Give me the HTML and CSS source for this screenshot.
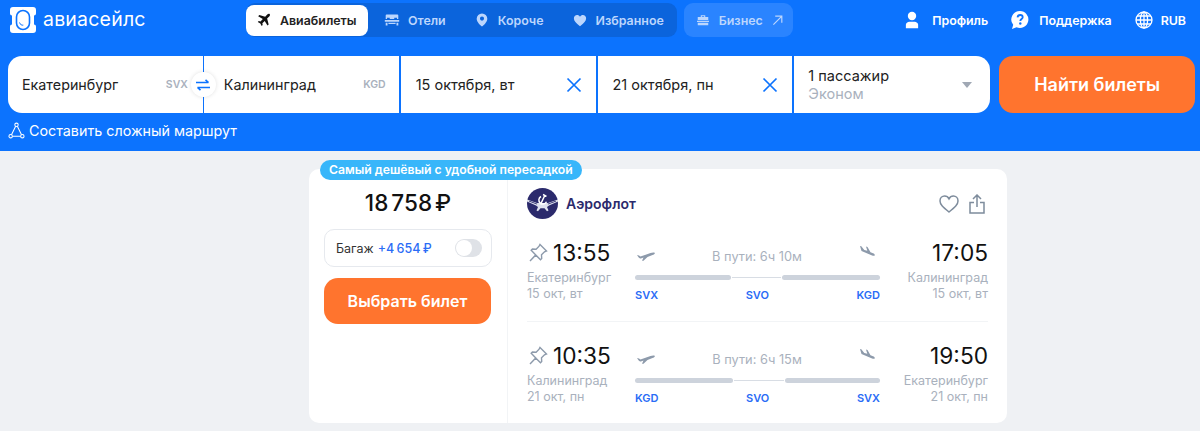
FILE: index.html
```html
<!DOCTYPE html>
<html lang="ru">
<head>
  <meta charset="UTF-8">
  <title>Авиасейлс</title>
  <link rel="stylesheet" href="styles.css">
</head>
<body>
  <header class="top">
    <div class="topbar">
      <a class="logo">
        <svg class="logo-icon" width="26" height="26" viewBox="0 0 26 26"><path fill="#fff" d="M3 0h20a3 3 0 0 1 3 3v3.500a2 2 0 0 1-2 2v9a2 2 0 0 1 2 2V23a3 3 0 0 1-3 3H3a3 3 0 0 1-3-3v-3.500a2 2 0 0 1 2-2v-9a2 2 0 0 1-2-2V3a3 3 0 0 1 3-3z"/><rect x="6.500" y="3.500" width="13" height="19" rx="6.500" fill="none" stroke="#0c73fe" stroke-width="1.600"/><path d="M9.500 15.500c.6 2 2.200 3 3.800 2.600" stroke="#0c73fe" stroke-width="1" fill="none"/></svg>
        <span class="logo-text">авиасейлс</span>
      </a>
      <nav class="tabs">
        <a class="tab active">
          <svg width="14" height="14" viewBox="0 0 18 18"><path fill="#111" d="M16.500 1.500c-1-.8-2.400-.4-3.300.5L10.500 4.700 3 2.700 1.500 4.200l6 3.600-3 3-2.200-.4L1 11.700l3.300 1.700L6 16.800l1.300-1.300-.4-2.300 3-3 3.600 6 1.500-1.500-2-7.500 2.700-2.700c.9-.9 1.300-2 .8-2.500z"/></svg>
          Авиабилеты
        </a>
        <a class="tab">
          <svg width="18" height="18" viewBox="-1 -1 20 20"><path fill="#bcd6fd" d="M3 3h12a1 1 0 0 1 1 1v4h-1.500V6.500h-3V8h-5V6.500h-3V8H2V4a1 1 0 0 1 1-1zM1 9h16v2H1zm1 3h2v3H2zm12 0h2v3h-2zM5 12h8v1.500H5z"/></svg>
          Отели
        </a>
        <a class="tab">
          <svg width="18" height="18" viewBox="-2 -2 22 22"><path fill="#bcd6fd" fill-rule="evenodd" d="M9 1a6.500 6.500 0 0 1 6.500 6.500C15.500 11.500 11 15.500 9 17 7 15.500 2.500 11.500 2.500 7.500A6.500 6.500 0 0 1 9 1zm0 3.800a2.500 2.500 0 1 0 0 5 2.500 2.500 0 0 0 0-5z"/></svg>
          Короче
        </a>
        <a class="tab">
          <svg width="18" height="18" viewBox="-2 -2 22 22"><path fill="#bcd6fd" d="M9 16.500C4 12.500 1.500 10 1.500 6.800 1.500 4.400 3.300 2.800 5.400 2.800c1.500 0 2.800.8 3.600 2.200.8-1.400 2.100-2.200 3.600-2.200 2.100 0 3.900 1.600 3.900 4 0 3.200-2.500 5.700-7.500 9.700z"/></svg>
          Избранное
        </a>
      </nav>
      <a class="biz">
        <svg width="12" height="12" viewBox="0 0 16 16"><path fill="#bcd6fd" d="M5 4V1.500h6V4h4v4H1V4zm1.500 0h3V3h-3zM0 9h16v1.500H0zm1 2.500h14V15H1z"/></svg>
        Бизнес
        <svg class="biz-arrow" width="11" height="11" viewBox="0 0 12 12"><path d="M1.500 10.500 10.500 1.500M3.500 1.300h7.200v7.200" stroke="#bcd6fd" stroke-width="1.300" fill="none"/></svg>
      </a>
      <div class="user-links">
        <a class="user-link profile">
          <svg width="14" height="18" viewBox="0 0 16 20"><circle cx="8" cy="5.500" r="4.800" fill="#fff"/><path fill="#fff" d="M1 19.500v-4c0-2 2-3.500 4-3.500h6c2 0 4 1.500 4 3.500v4z"/></svg>
          Профиль
        </a>
        <a class="user-link">
          <svg width="18" height="20" viewBox="0 0 18 20"><path fill="#fff" d="M9 1a8.500 8.500 0 1 1-3.500 16.300L1 19l1.200-4.200A8.500 8.500 0 0 1 9 1z"/><path d="M6.500 7.400C6.700 5.900 7.800 5 9.200 5c1.500 0 2.500 1 2.500 2.200 0 1.800-2.400 1.800-2.400 3.800" stroke="#0c73fe" stroke-width="1.800" fill="none"/><circle cx="9.300" cy="13.500" r="1.200" fill="#0c73fe"/></svg>
          Поддержка
        </a>
        <a class="user-link currency">
          <svg width="18" height="18" viewBox="0 0 18 18" fill="none" stroke="#fff" stroke-width="1.300"><circle cx="9" cy="9" r="8"/><ellipse cx="9" cy="9" rx="3.600" ry="8"/><path d="M9 1v16M1 9h16M2 5h14M2 13h14"/></svg>
          RUB
        </a>
      </div>
    </div>

    <div class="search">
      <div class="field origin">
        <span class="city">Екатеринбург</span><span class="iata">SVX</span>
        <span class="swap">
          <svg width="14" height="12" viewBox="0 0 14 12" fill="none" stroke="#0c73fe" stroke-width="1.600"><path d="M0 3.500h12.500M9.500.8l3 2.700M14 8.500H1.500M4.500 11.200l-3-2.700"/></svg>
        </span>
      </div>
      <div class="field dest">
        <span class="city">Калининград</span><span class="iata">KGD</span>
      </div>
      <div class="field date">
        <span>15 октября, вт</span>
        <svg class="clear" width="16" height="16" viewBox="0 0 16 16"><path d="M1.500 1.500l13 13M14.500 1.500l-13 13" stroke="#0c73fe" stroke-width="1.700"/></svg>
      </div>
      <div class="field date">
        <span>21 октября, пн</span>
        <svg class="clear" width="16" height="16" viewBox="0 0 16 16"><path d="M1.500 1.500l13 13M14.500 1.500l-13 13" stroke="#0c73fe" stroke-width="1.700"/></svg>
      </div>
      <div class="field pax">
        <div class="pax-text">
          <div>1 пассажир</div>
          <div class="pax-class">Эконом</div>
        </div>
        <span class="caret"></span>
      </div>
      <button class="find">Найти билеты</button>
    </div>

    <a class="route-link">
      <svg width="17" height="17" viewBox="0 0 18 18" fill="none" stroke="#fff" stroke-width="1.100"><circle cx="9" cy="3" r="1.800"/><circle cx="2.800" cy="15" r="1.800"/><circle cx="15.200" cy="15" r="1.800"/><path d="M8.100 4.600 3.700 13.400M9.900 4.600l4.400 8.800M4.600 15h8.800"/></svg>
      Составить сложный маршрут
    </a>
  </header>

  <main class="results">
    <article class="ticket">
      <span class="badge">Самый дешёвый с удобной пересадкой</span>
      <section class="buy">
        <div class="price">18 758 ₽</div>
        <div class="baggage">
          <span class="baggage-label">Багаж</span>
          <span class="baggage-price">+4 654 ₽</span>
          <span class="toggle"></span>
        </div>
        <button class="select">Выбрать билет</button>
      </section>

      <section class="details">
        <div class="ticket-head">
          <svg width="31" height="31" viewBox="0 0 31 31"><circle cx="15.500" cy="15.500" r="15.500" fill="#2b2a6c"/><path fill="#dfe2ee" d="M0 11.500l10 3.500h11l10-3.500v2L22 17.500l-2 1.500 1.500 3.500-1.500.7-2.500-3h-4l-2.500 3-1.500-.7L11 19l-2-1.500L0 13.500z"/><path fill="#2b2a6c" d="M2 13.500l8 3 .3-.7-8-3zM29 13.500l-8 3-.3-.7 8-3z"/><path d="M14 8.500a4 4 0 1 0 5.500 5.200M13.500 16.500l4.500-9.500M16 6.500l3.500 1.800" stroke="#fff" stroke-width="1.500" fill="none"/></svg>
          <span class="airline">Аэрофлот</span>
          <div class="head-actions">
            <svg width="20" height="18" viewBox="0 0 20 18"><path fill="none" stroke="#7e8c9c" stroke-width="1.500" d="M10 17C4 12 1 9.500 1 5.900 1 3 3.200 1 5.600 1c1.900 0 3.500 1 4.400 2.800C10.900 2 12.500 1 14.400 1 16.800 1 19 3 19 5.900 19 9.500 16 12 10 17z"/></svg>
            <svg width="16" height="20" viewBox="0 0 16 20" fill="none" stroke="#7e8c9c" stroke-width="1.500"><path d="M8 13V1.500M4 5l4-4 4 4M5 8.500H1v10.500h14V8.500h-4"/></svg>
          </div>
        </div>

        <div class="leg">
          <div class="point">
            <div class="time">
              <svg class="pin" width="20" height="20" viewBox="0 0 20 20"><path fill="none" stroke="#8d9aab" stroke-width="1.400" d="M12 1.500l6.500 6.500-2 .8-3 3 .2 3.700-1.200 1.200L7.700 11.900 2 18l5.800-6-4.600-4.800L4.400 6l3.700.2 3-3z"/></svg>
              13:55
            </div>
            <div class="sub">Екатеринбург</div>
            <div class="sub">15 окт, вт</div>
          </div>
          <div class="track">
            <div class="track-top">
              <svg class="takeoff" width="18" height="10" viewBox="0 0 18 10"><path fill="#8d9aab" d="M0 4l2 .4 1.500 1.200 10-3.600c1.500-.5 3.800-.9 4.300 0 .3.800-1 1.500-2.300 2L10.500 6 6.500 9.700H5l1.500-3.200-2 .7C3 7.700 2 7.300 1.500 6.300z"/></svg>
              <span class="duration">В пути: 6ч 10м</span>
              <svg width="16" height="13" viewBox="0 0 16 13"><path fill="#8d9aab" d="M1 0l1.300.2 3 3.800 3 .7L7 .5 8.500 1l3 5.200 2.500 1c1 .4 2 1.200 1.800 2-.3.800-1.600.6-2.700.2L2.500 5z"/></svg>
            </div>
            <div class="bars">
              <span class="bar seg-a"></span><span class="thin"></span><span class="bar seg-b"></span>
            </div>
            <div class="codes"><span>SVX</span><span>SVO</span><span>KGD</span></div>
          </div>
          <div class="point right">
            <div class="time">17:05</div>
            <div class="sub">Калининград</div>
            <div class="sub">15 окт, вт</div>
          </div>
        </div>

        <hr class="divider">

        <div class="leg">
          <div class="point">
            <div class="time">
              <svg class="pin" width="20" height="20" viewBox="0 0 20 20"><path fill="none" stroke="#8d9aab" stroke-width="1.400" d="M12 1.500l6.500 6.500-2 .8-3 3 .2 3.700-1.200 1.200L7.700 11.900 2 18l5.800-6-4.600-4.800L4.400 6l3.700.2 3-3z"/></svg>
              10:35
            </div>
            <div class="sub">Калининград</div>
            <div class="sub">21 окт, пн</div>
          </div>
          <div class="track">
            <div class="track-top">
              <svg class="takeoff" width="18" height="10" viewBox="0 0 18 10"><path fill="#8d9aab" d="M0 4l2 .4 1.500 1.200 10-3.600c1.500-.5 3.800-.9 4.300 0 .3.800-1 1.500-2.300 2L10.500 6 6.500 9.700H5l1.500-3.200-2 .7C3 7.700 2 7.300 1.500 6.300z"/></svg>
              <span class="duration">В пути: 6ч 15м</span>
              <svg width="16" height="13" viewBox="0 0 16 13"><path fill="#8d9aab" d="M1 0l1.300.2 3 3.800 3 .7L7 .5 8.500 1l3 5.200 2.500 1c1 .4 2 1.200 1.800 2-.3.800-1.600.6-2.700.2L2.500 5z"/></svg>
            </div>
            <div class="bars">
              <span class="bar seg-c"></span><span class="thin"></span><span class="bar seg-d"></span>
            </div>
            <div class="codes"><span>KGD</span><span>SVO</span><span>SVX</span></div>
          </div>
          <div class="point right">
            <div class="time">19:50</div>
            <div class="sub">Екатеринбург</div>
            <div class="sub">21 окт, пн</div>
          </div>
        </div>
      </section>
    </article>
  </main>
</body>
</html>
```
FILE: styles.css
```css
* {
  box-sizing: border-box;
}
body {
  margin: 0;
  height: 431px;
  overflow: hidden;
  background-color: #eff1f4;
  font-family: Inter, 'Noto Sans', sans-serif;
  color: #222;
}
svg {
  display: block;
  flex: none;
}
button {
  font-family: inherit;
  border: none;
  color: #fff;
  background-color: #ff742e;
}

/* header */
.top {
  height: 151px;
  background-color: #0c73fe;
  padding: 3px 5px 0 8px;
}
.topbar {
  display: flex;
  align-items: center;
  height: 34px;
}
.logo {
  display: flex;
  align-items: center;
  gap: 7px;
  width: 238px;
  padding-left: 2px;
}
.logo-text {
  color: #fff;
  font-size: 19.5px;
  letter-spacing: 0.2px;
  line-height: 24px;
  margin-top: -3px;
}
.tabs {
  display: flex;
  align-items: center;
  height: 34px;
  background-color: #0b64dc;
  border-radius: 9px;
  padding-right: 1px;
}
.tab {
  display: flex;
  align-items: center;
  gap: 7px;
  height: 32px;
  padding: 0 12px 0 11px;
  margin-right: 4px;
  font-size: 12.4px;
  font-weight: 600;
  color: #bcd6fd;
}
.tab:last-child {
  margin-right: 0;
}
.tab.active {
  gap: 9px;
  width: 122px;
  height: 31px;
  background-color: #fff;
  color: #222;
  border-radius: 8px;
}
.biz {
  display: flex;
  align-items: center;
  gap: 10px;
  width: 109px;
  height: 34px;
  margin-left: 7px;
  padding-left: 13px;
  border-radius: 9px;
  background-color: #2a84ff;
  color: #bcd6fd;
  font-size: 12.4px;
  font-weight: 600;
}
.biz-arrow {
  margin-left: -1px;
}
.user-links {
  display: flex;
  align-items: center;
  gap: 23px;
  margin-left: auto;
  padding-right: 9px;
}
.user-link {
  display: flex;
  align-items: center;
  gap: 10px;
  color: #fff;
  font-size: 12.4px;
  font-weight: 600;
}
.user-link.profile {
  gap: 13px;
}
.user-link.currency {
  gap: 8px;
}

/* search form */
.search {
  display: flex;
  height: 58px;
  margin-top: 19px;
}
.field {
  position: relative;
  display: flex;
  align-items: center;
  justify-content: space-between;
  height: 57px;
  background-color: #fff;
  font-size: 14.5px;
  margin-right: 2px;
}
.origin {
  width: 195px;
  padding: 0 15px 0 14px;
  margin-right: 1px;
  border-radius: 14px 0 0 14px;
}
.dest {
  width: 195px;
  padding: 0 13px 0 20px;
}
.city {
  font-size: 14.3px;
}
.iata {
  font-size: 10.5px;
  font-weight: 600;
  color: #a9b1bd;
}
.swap {
  position: absolute;
  right: -13px;
  top: 16px;
  z-index: 1;
  display: flex;
  align-items: center;
  justify-content: center;
  width: 25px;
  height: 25px;
  border-radius: 50%;
  background-color: #fff;
  box-shadow: 0 0 4px rgba(0, 0, 0, 0.12);
}
.date {
  width: 195px;
  padding: 0 14px 0 15px;
}
.pax {
  width: 196px;
  padding: 0 18px 0 14px;
  margin-right: 9px;
  border-radius: 0 14px 14px 0;
}
.pax-text {
  line-height: 17.500px;
}
.pax-class {
  color: #a9b1bd;
}
.caret {
  border-left: 5px solid transparent;
  border-right: 5px solid transparent;
  border-top: 6px solid #a0a8b4;
}
.find {
  width: 196px;
  height: 57px;
  border-radius: 14px;
  font-size: 18px;
  font-weight: 600;
}
.route-link {
  display: flex;
  align-items: center;
  gap: 4px;
  margin-top: 8px;
  color: #fff;
  font-size: 14.3px;
}

/* ticket */
.results {
  padding: 18px 0 0 309px;
}
.ticket {
  position: relative;
  display: flex;
  width: 698px;
  height: 254px;
  background-color: #fff;
  border-radius: 10px;
}
.badge {
  position: absolute;
  left: 11px;
  top: -9px;
  height: 20px;
  padding: 0 9px;
  border-radius: 10px;
  background-color: #38b6fa;
  color: #fff;
  font-size: 12.2px;
  font-weight: 600;
  line-height: 20px;
}
.buy {
  width: 199px;
  padding: 20px 15px 0 15px;
  border-right: 1px solid #f2f4f6;
}
.price {
  font-size: 22.5px;
  font-weight: 500;
  line-height: 27px;
  text-align: center;
  word-spacing: -3px;
  color: #111;
}
.baggage {
  display: flex;
  align-items: center;
  height: 38px;
  margin-top: 13px;
  padding: 0 9px 0 11px;
  border: 1px solid #e6e9ee;
  border-radius: 10px;
  font-size: 12.5px;
}
.baggage-label {
  margin-right: 4px;
  color: #333;
}
.baggage-price {
  color: #2a6cf6;
  font-weight: 500;
  word-spacing: -1px;
}
.toggle {
  position: relative;
  width: 27px;
  height: 18px;
  margin-left: auto;
  border-radius: 9px;
  background-color: #dfe2e7;
}
.toggle::after {
  content: "";
  position: absolute;
  left: 1px;
  top: 1px;
  width: 16px;
  height: 16px;
  border-radius: 50%;
  background-color: #fff;
}
.select {
  display: block;
  width: 167px;
  height: 46px;
  margin-top: 11px;
  border-radius: 14px;
  font-size: 16px;
  font-weight: 600;
}
.details {
  flex: 1;
  padding: 19px 19px 0 19px;
}
.ticket-head {
  display: flex;
  align-items: center;
  height: 31px;
}
.airline {
  margin-left: 8px;
  color: #2b2a6c;
  font-size: 14px;
  font-weight: 600;
}
.head-actions {
  display: flex;
  align-items: center;
  gap: 10px;
  margin-left: auto;
  padding-right: 3px;
}
.leg {
  display: flex;
  justify-content: space-between;
  margin-top: 20px;
}
.leg + .divider {
  margin: 19px 0 0;
}
.divider {
  height: 1px;
  border: none;
  background-color: #f2f4f6;
}
.divider + .leg {
  margin-top: 20px;
}
.point {
  width: 108px;
}
.point.right {
  text-align: right;
}
.time {
  display: flex;
  align-items: center;
  gap: 5px;
  height: 27px;
  font-size: 22.7px;
  color: #111;
}
.right .time {
  justify-content: flex-end;
}
.pin {
  margin-left: 1px;
}
.sub {
  font-size: 12.5px;
  line-height: 16px;
  color: #a9b1bd;
}
.time + .sub {
  margin-top: 4px;
}
.track {
  width: 245px;
}
.track-top {
  display: flex;
  align-items: center;
  justify-content: space-between;
  height: 27px;
  padding: 0 5px 0 2px;
}
.takeoff {
  margin-top: 6px;
}
.duration {
  margin-top: 8px;
  font-size: 12.8px;
  color: #a9b1bd;
}
.bars {
  display: flex;
  align-items: center;
  margin-top: 9px;
}
.bar {
  height: 5px;
  border-radius: 3px;
  background-color: #cdd3dc;
}
.thin {
  flex: 1;
  height: 1px;
  margin: 0 1px;
  background-color: #d8dde4;
}
.seg-a {
  width: 96px;
}
.seg-b {
  width: 98px;
}
.seg-c {
  width: 98px;
}
.seg-d {
  width: 95px;
}
.codes {
  display: flex;
  justify-content: space-between;
  margin-top: 8px;
  font-size: 11px;
  font-weight: 600;
  color: #2a6cf6;
}
```
